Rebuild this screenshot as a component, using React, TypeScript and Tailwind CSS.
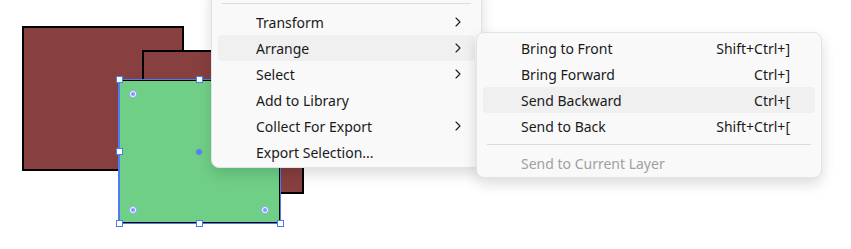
const Chevron = () => (
  <svg width="6" height="10" viewBox="0 0 6 10" fill="none">
    <path d="M1 1l4 4-4 4" stroke="#1f1f1f" strokeWidth="1.1" strokeLinecap="round" strokeLinejoin="round" />
  </svg>
);

const Handle = ({ x, y }: { x: number; y: number }) => (
  <div
    className="absolute w-[7px] h-[7px] bg-white border border-[#4d7bf3]"
    style={{ left: x - 3, top: y - 3 }}
  />
);

const Pivot = ({ x, y }: { x: number; y: number }) => (
  <div
    className="absolute w-[8px] h-[8px] rounded-full border border-[#8aa6f7] bg-white flex items-center justify-center"
    style={{ left: x - 4, top: y - 4 }}
  >
    <div className="w-[4px] h-[4px] rounded-full bg-[#7d9bf3]" />
  </div>
);

const mainItems = [
  { label: "Transform", sub: true },
  { label: "Arrange", sub: true, active: true },
  { label: "Select", sub: true },
  { label: "Add to Library" },
  { label: "Collect For Export", sub: true },
  { label: "Export Selection..." },
];

const arrangeItems = [
  { label: "Bring to Front", key: "Shift+Ctrl+]" },
  { label: "Bring Forward", key: "Ctrl+]" },
  { label: "Send Backward", key: "Ctrl+[", active: true },
  { label: "Send to Back", key: "Shift+Ctrl+[" },
];

export default function App() {
  return (
    <div
      className="relative w-[851px] h-[249px] bg-white overflow-hidden text-[14px] text-[#1a1a1a]"
      style={{ fontFamily: '"Noto Sans", "Segoe UI", sans-serif' }}
    >
      {/* canvas shapes */}
      <div className="absolute left-[22px] top-[26px] w-[162px] h-[145px] bg-[#873f3f] border-2 border-black" />
      <div className="absolute left-[142px] top-[50px] w-[162px] h-[144px] bg-[#873f3f] border-2 border-black" />
      <div className="absolute left-[118px] top-[79px] w-[163px] h-[145px] border border-l-2 border-[#4d7bf3]">
        <div className="w-full h-full bg-[#6fcf87] border border-l-0 border-black" />
      </div>
      <Handle x={119} y={79} />
      <Handle x={199} y={79} />
      <Handle x={119} y={151} />
      <Handle x={119} y={223} />
      <Handle x={199} y={223} />
      <Handle x={280} y={223} />
      <Pivot x={133} y={94} />
      <Pivot x={133} y={210} />
      <Pivot x={265} y={210} />
      <div className="absolute left-[196px] top-[149px] w-[6px] h-[6px] rounded-full bg-[#5b7ff0]" />

      {/* context menu */}
      <div className="absolute left-[211px] top-[-17px] w-[271px] pt-[4px] pb-[2px] bg-[#f9f9f9] border border-[#e3e3e3] rounded-lg shadow-[0_6px_14px_rgba(0,0,0,0.14)]">
        <div className="h-[10px]" />
        <div className="py-[5px] mx-[10px]">
          <div className="h-px bg-[#dcdcdc]" />
        </div>
        {mainItems.map((it) => (
          <div
            key={it.label}
            className={`mx-[6px] h-[26px] flex items-center pl-[38px] pr-[14px] rounded-[4px] ${it.active ? "bg-[#f0f0f0]" : ""}`}
          >
            <span className="flex-1">{it.label}</span>
            {it.sub && <Chevron />}
          </div>
        ))}
      </div>

      {/* submenu */}
      <div className="absolute left-[476px] top-[32px] w-[346px] pt-[2px] pb-[1px] bg-[#f9f9f9] border border-[#e3e3e3] rounded-lg shadow-[0_6px_14px_rgba(0,0,0,0.14)]">
        {arrangeItems.map((it) => (
          <div
            key={it.label}
            className={`mx-[6px] h-[26px] flex items-center pl-[38px] pr-[25px] rounded-[4px] ${it.active ? "bg-[#f0f0f0]" : ""}`}
          >
            <span className="flex-1">{it.label}</span>
            <span>{it.key}</span>
          </div>
        ))}
        <div className="py-[5px] mx-[10px]">
          <div className="h-px bg-[#dcdcdc]" />
        </div>
        <div className="mx-[6px] h-[26px] flex items-center pl-[38px] text-[#a0a0a0]">
          Send to Current Layer
        </div>
      </div>
    </div>
  );
}
